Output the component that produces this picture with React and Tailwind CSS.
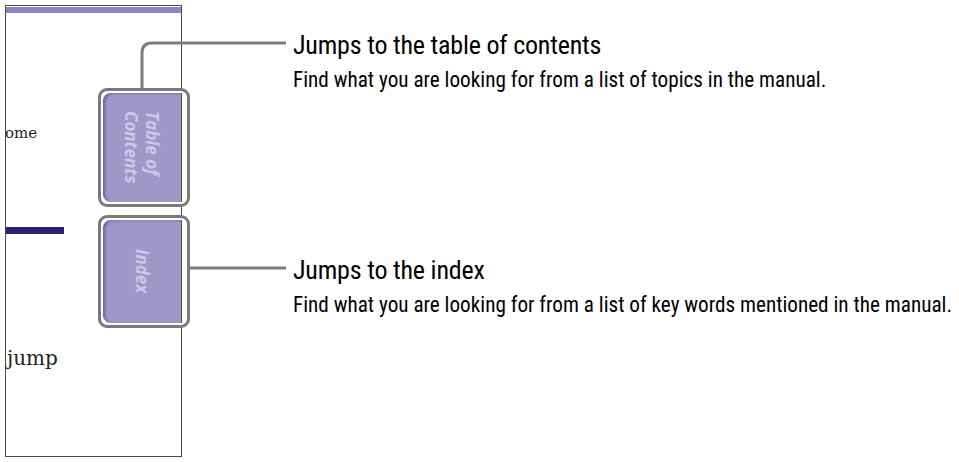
// Manual page edge with the two navigation tabs and their callouts
const narrow = { fontFamily: '"Liberation Sans Narrow", "Roboto Condensed", "Liberation Sans", sans-serif' }
const serif = { fontFamily: '"DejaVu Serif", "Liberation Serif", serif' }

function Tab({ top, height, children }) {
  return (
    <div
      className="absolute left-[98px] w-[92px] rounded-[9px] border-[3px] border-[#7a7a7a] bg-white py-[2px] pl-[2px]"
      style={{ top, height }}
    >
      <div className="flex h-full w-[79px] items-center justify-center rounded-l-[8px] border-r-[1.5px] border-[#555] bg-[#9d98c8] shadow-[inset_3px_1px_3px_-1px_rgba(50,40,100,0.5)]">
        <div
          className="text-[17px] font-bold italic leading-[21px] text-[#ccc8ea] [writing-mode:vertical-rl]"
          style={{ fontFamily: '"Open Sans", "Liberation Sans", sans-serif' }}
        >
          {children}
        </div>
      </div>
    </div>
  )
}

export default function App() {
  return (
    <div className="relative flex h-[462px] w-[959px] overflow-hidden bg-white">
      {/* page edge */}
      <div className="ml-[5px] mt-[5px] flex h-[452px] w-[177px] shrink-0 flex-col overflow-hidden border-[1.5px] border-[#4a4a4a]">
        <div className="mt-[0.5px] h-[6px] bg-[#8c87c2]" />
        <div className="ml-[-14px] mt-[111px] whitespace-nowrap text-[15px] leading-[18px] text-[#222]" style={serif}>
          Home
        </div>
        <div className="mt-[85px] h-[7px] w-[58px] bg-[#2b2170]" />
        <div className="ml-[1px] mt-[113px] text-[20px] leading-[23px] text-[#222]" style={serif}>
          jump
        </div>
      </div>

      {/* callout text */}
      <div className="ml-[111px] flex flex-col whitespace-nowrap pt-[30px] text-black" style={narrow}>
        <div className="text-[26px] leading-[31px] tracking-[-0.2px]">Jumps to the table of contents</div>
        <div className="mt-[6px] text-[21.2px] leading-[26px]">
          Find what you are looking for from a list of topics in the manual.
        </div>
        <div className="mt-[162px] text-[26px] leading-[31px] tracking-[-0.2px]">Jumps to the index</div>
        <div className="mt-[6px] text-[21.2px] leading-[26px]">
          Find what you are looking for from a list of key words mentioned in the manual.
        </div>
      </div>

      {/* leader lines */}
      <svg className="absolute left-0 top-0" width="959" height="462" fill="none">
        <path d="M142 88 V53 Q142 43 152 43 H286" stroke="#7d7d7d" strokeWidth="3" />
        <path d="M190 268 H286" stroke="#7d7d7d" strokeWidth="3" />
      </svg>

      <Tab top={88} height={119}>
        Table of<br />Contents
      </Tab>
      <Tab top={215} height={113}>
        Index
      </Tab>
    </div>
  )
}
